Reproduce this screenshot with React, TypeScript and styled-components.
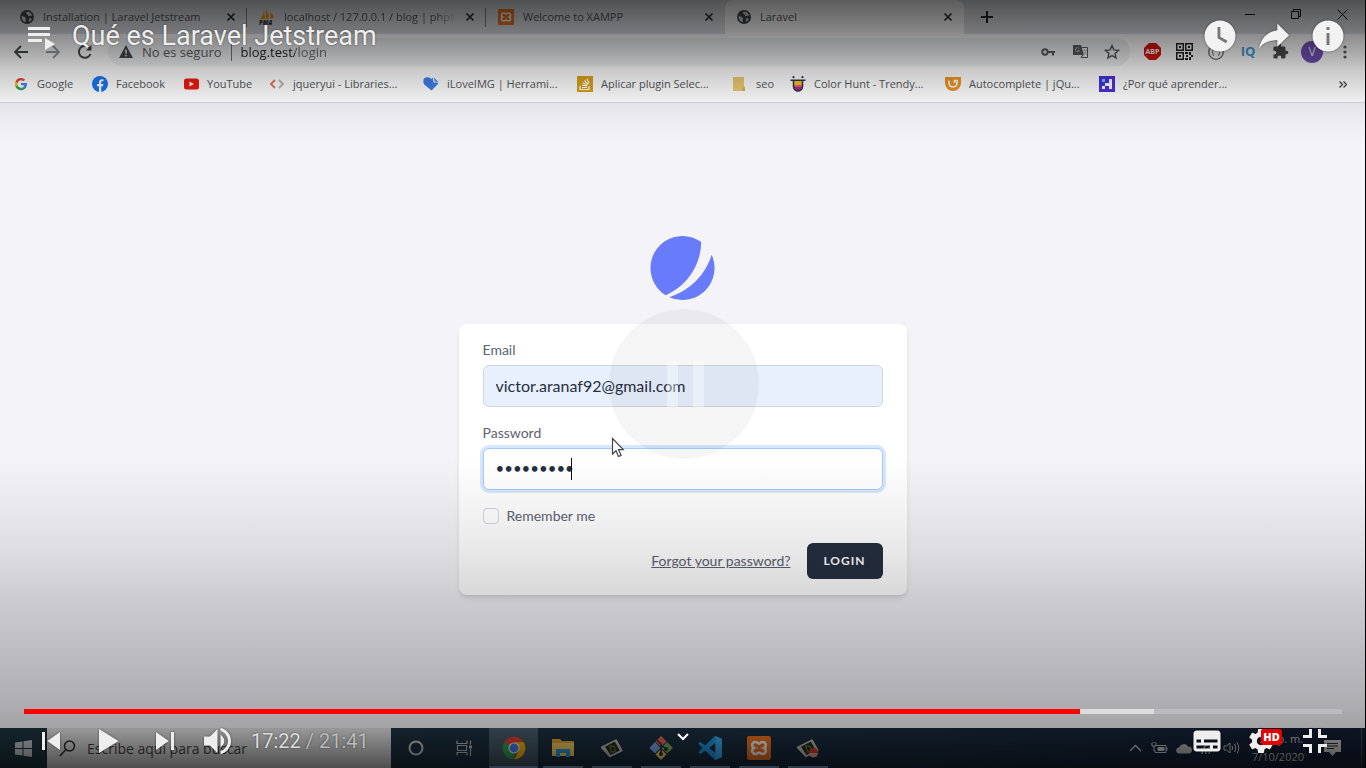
import React from "react";
import styled, { createGlobalStyle, css } from "styled-components";

const GlobalStyle = createGlobalStyle`
  * { box-sizing: border-box; }
  html, body { margin: 0; padding: 0; background: #000; }
  button, input { font: inherit; color: inherit; }
  button { border: 0; padding: 0; margin: 0; background: none; cursor: pointer; }
  a { color: inherit; }
  svg { display: block; flex: none; }
`;

/* ---------- shell ---------- */

const Stage = styled.div`
  position: relative;
  display: flex;
  flex-direction: column;
  min-height: 100vh;
  border-right: 1px solid #000;
  background: #f3f3f8;
  overflow: hidden;
  font-family: "Open Sans", "Noto Sans", sans-serif;
  font-size: 12px;
  color: #45484c;
`;

const TabStrip = styled.header`
  display: flex;
  align-items: stretch;
  height: 34px;
  padding-left: 8px;
  background: #dee1e6;
`;

const TabItem = styled.div<{ $active?: boolean; $divider?: boolean }>`
  position: relative;
  display: flex;
  align-items: center;
  gap: 9px;
  flex: 0 1 239px;
  min-width: 0;
  padding: 0 11px 0 12px;
  ${(p) =>
    p.$active &&
    css`
      background: #fff;
      border-radius: 8px 8px 0 0;
    `}
  ${(p) =>
    p.$divider &&
    css`
      &::after {
        content: "";
        position: absolute;
        right: 0;
        top: 8px;
        height: 19px;
        width: 1px;
        background: #808388;
      }
    `}
`;

const TabTitle = styled.span<{ $fade?: boolean }>`
  flex: 1;
  min-width: 0;
  overflow: hidden;
  white-space: nowrap;
  font-size: 11px;
  line-height: 16px;
  color: #54575b;
  ${(p) =>
    p.$fade &&
    css`
      mask-image: linear-gradient(90deg, #000 88%, transparent);
    `}
`;

const PlainButton = styled.button<{ $w?: number }>`
  display: flex;
  align-items: center;
  justify-content: center;
  flex: none;
  width: ${(p) => (p.$w ? `${p.$w}px` : "auto")};
`;

const WindowControls = styled.div`
  display: flex;
  margin-left: auto;
  height: 28px;
`;

const Toolbar = styled.div`
  display: flex;
  align-items: center;
  height: 35px;
  padding: 0 1px 0 5px;
  background: #fff;
`;

const Omnibox = styled.div`
  display: flex;
  align-items: center;
  flex: 1;
  height: 28px;
  margin: 0 4px 0 7px;
  padding: 0 2px 0 11px;
  border-radius: 14px;
  background: #f1f3f4;
  font-size: 13px;
  line-height: 18px;
`;

const Security = styled.span`
  margin-left: 9px;
  padding-right: 9px;
  border-right: 1px solid #777;
  color: #5f6368;
`;

const Address = styled.input`
  flex: 1;
  min-width: 0;
  margin-left: 9px;
  padding: 0;
  border: 0;
  outline: 0;
  color: transparent;
  background: linear-gradient(90deg, #202124 54px, #6b6f74 54px);
  background-clip: text;
`;

const Bookmarks = styled.nav`
  display: flex;
  align-items: center;
  gap: 16px;
  height: 34px;
  padding: 0 12px 3px 13px;
  border-bottom: 1px solid #dcdce2;
  background: #fff;
`;

const Bookmark = styled.a<{ $w: number }>`
  display: flex;
  align-items: center;
  gap: 8px;
  flex: 0 0 ${(p) => p.$w}px;
  overflow: hidden;
  white-space: nowrap;
  text-decoration: none;
  font-size: 11px;
  line-height: 18px;
  color: #54575b;
`;

/* ---------- login page ---------- */

const LoginPage = styled.main`
  display: flex;
  flex: 1;
  flex-direction: column;
  align-items: center;
  justify-content: center;
  gap: 24px;
  color: #5d6270;
  font-family: Lato, "Open Sans", sans-serif;
  font-size: 14px;
  line-height: 20px;
`;

const Card = styled.form`
  position: relative;
  width: 100%;
  max-width: 448px;
  padding: 16px 24px;
  border-radius: 8px;
  background: #fff;
  box-shadow: 0 4px 6px -1px rgba(0, 0, 0, 0.1), 0 2px 4px -1px rgba(0, 0, 0, 0.06);
`;

const Field = styled.div`
  position: relative;
  margin-bottom: 16px;
  label { display: block; margin-bottom: 5px; }
`;

const TextBox = styled.input<{ $focused?: boolean }>`
  display: block;
  width: 100%;
  height: 42px;
  padding: 0 12px 2px;
  border: 1px solid ${(p) => (p.$focused ? "#a4cafe" : "#d2d6e0")};
  border-radius: 6px;
  outline: 0;
  background: ${(p) => (p.$focused ? "#fff" : "#e8f0fe")};
  box-shadow: ${(p) => (p.$focused ? "0 0 0 3px rgba(164, 202, 254, 0.45)" : "none")};
  color: #252f3f;
  font-size: ${(p) => (p.$focused ? "15px" : "16px")};
`;

const Caret = styled.span`
  position: absolute;
  left: 88px;
  bottom: 10px;
  width: 1px;
  height: 22px;
  background: #111;
`;

const Remember = styled.label`
  display: flex;
  align-items: center;
  gap: 8px;
  margin-bottom: 17px;
  input {
    appearance: none;
    width: 16px;
    height: 16px;
    margin: 0;
    border: 1px solid #d2d6dc;
    border-radius: 4px;
    background: #fff;
  }
`;

const Actions = styled.div`
  display: flex;
  align-items: center;
  justify-content: flex-end;
  gap: 16px;
`;

const LoginButton = styled.button`
  min-width: 76px;
  height: 36px;
  padding: 0 16px;
  border-radius: 6px;
  background: #252f3f;
  color: #fff;
  font-size: 12px;
  font-weight: 700;
  letter-spacing: 1px;
`;

const Pointer = styled.svg`
  position: absolute;
  left: 152px;
  top: 113px;
`;

/* ---------- desktop taskbar ---------- */

const Taskbar = styled.footer`
  display: flex;
  align-items: stretch;
  height: 40px;
  background: linear-gradient(90deg, #1d3640, #1b2f40 50%, #131e34);
  color: #c0c0c0;
`;

const SearchBox = styled.label`
  display: flex;
  align-items: center;
  gap: 11px;
  width: 344px;
  padding-left: 12px;
  background: #dedede;
  color: #333;
  input {
    flex: 1;
    min-width: 0;
    border: 0;
    outline: 0;
    padding: 0;
    background: none;
    font-size: 14px;
  }
  input::placeholder { color: #444; opacity: 1; }
`;

const TaskButton = styled.button<{ $active?: boolean; $running?: boolean }>`
  display: flex;
  align-items: center;
  justify-content: center;
  width: 49px;
  background: ${(p) => (p.$active ? "#475c6a" : "transparent")};
  ${(p) =>
    p.$running &&
    css`
      background-image: linear-gradient(#76a9d8, #76a9d8);
      background-size: ${p.$active ? "49px" : "40px"} 2px;
      background-position: bottom center;
      background-repeat: no-repeat;
    `}
`;

const Tray = styled.div`
  display: flex;
  align-items: center;
  margin: 0 3px 0 auto;
  padding-right: 11px;
  border-right: 1px solid #3c4658;
`;

const DateTime = styled.div`
  width: 72px;
  text-align: center;
  font-size: 11px;
  line-height: 18px;
  white-space: nowrap;
`;

/* ---------- video player overlay ---------- */

const Player = styled.section`
  position: absolute;
  inset: 0;
  display: flex;
  flex-direction: column;
  justify-content: space-between;
  color: #eee;
  font-family: Roboto, sans-serif;
  background:
    linear-gradient(
      rgba(0, 0, 0, 0.64),
      rgba(0, 0, 0, 0.48) 30px,
      rgba(0, 0, 0, 0.34) 52px,
      rgba(0, 0, 0, 0.21) 70px,
      rgba(0, 0, 0, 0.07) 100px,
      rgba(0, 0, 0, 0.02) 125px,
      rgba(0, 0, 0, 0) 150px
    ),
    linear-gradient(
      to top,
      rgba(0, 0, 0, 0.65),
      rgba(0, 0, 0, 0.33) 38px,
      rgba(0, 0, 0, 0.28) 68px,
      rgba(0, 0, 0, 0.16) 168px,
      rgba(0, 0, 0, 0.09) 218px,
      rgba(0, 0, 0, 0.04) 268px,
      rgba(0, 0, 0, 0) 310px
    );
`;

const PlayerTop = styled.div`
  display: flex;
  align-items: center;
  height: 72px;
  padding: 0 10px 0 27px;
`;

const VideoTitle = styled.h1`
  flex: 1;
  margin: 0 0 0 17px;
  font-size: 27px;
  font-weight: 400;
  line-height: 32px;
  text-shadow: 0 0 2px rgba(0, 0, 0, 0.5);
`;

const PlayerBottom = styled.div`
  position: relative;
  padding: 0 23px 0 24px;
`;

const Progress = styled.div`
  position: relative;
  height: 5px;
  background: rgba(255, 255, 255, 0.2);
`;

const ProgressPart = styled.div<{ $end: number; $color: string }>`
  position: absolute;
  inset: 0 auto 0 0;
  width: ${(p) => p.$end}%;
  background: ${(p) => p.$color};
`;

const Controls = styled.div`
  display: flex;
  align-items: center;
  height: 54px;
`;

const Spacer = styled.span`
  flex: 1;
`;

const PlayerButton = styled.button<{ $w?: number }>`
  position: relative;
  width: ${(p) => p.$w ?? 54}px;
  height: 54px;
  svg { filter: drop-shadow(0 0 1px rgba(0, 0, 0, 0.5)); }
`;

const Time = styled.span`
  margin-left: 5px;
  font-size: 20px;
  color: #ddd;
  text-shadow: 0 0 2px rgba(0, 0, 0, 0.5);
  span { color: #bbb; }
`;

const Badge = styled.span`
  position: absolute;
  left: 27px;
  top: 15px;
  width: 21px;
  height: 16px;
  border-radius: 2px;
  background: #e60000;
  color: #fff;
  font: 800 11px/16px "Open Sans", sans-serif;
  text-align: center;
`;

const MoreButton = styled.button`
  position: absolute;
  left: 50%;
  top: 24px;
  margin-left: -6px;
`;

const Bezel = styled.div`
  position: absolute;
  left: 50%;
  top: 50%;
  display: flex;
  align-items: center;
  justify-content: center;
  gap: 15px;
  width: 150px;
  height: 150px;
  margin: -75px 0 0 -74px;
  padding-left: 3px;
  border-radius: 50%;
  background: rgba(0, 0, 0, 0.04);
  pointer-events: none;
  i { width: 11px; height: 46px; background: rgba(255, 255, 255, 0.4); }
`;

/* ---------- icons ---------- */

const Globe = () => (
  <svg width="14" height="14" viewBox="0 0 14 14">
    <circle cx="7" cy="7" r="7" fill="#45484c" />
    <path d="M1.800 5.200c1 1.800 2.800 1.200 3.800 2.600.8 1.400-.6 2 .2 4.200C3.400 11.800 1 9 1.800 5.200zM6.500 1.800c2.800-.6 5 1.200 5.600 3.600-.8 1-1.400-.2-2.400.6-1 .6-1.800.2-1.600-.8.2-1.200-1.800-.6-2-1.800-.1-.8.1-1.200.4-1.600zM9.500 8.500c1-.6 2 0 2.200.8-.6 1.200-1.400 2-2.400 2.400-.6-1.200-.4-2.400.2-3.200z" fill="#d4d6da" />
  </svg>
);

const Cross = () => (
  <svg width="10" height="10" viewBox="0 0 10 10" stroke="#2c2e31" strokeWidth="1.700">
    <path d="M1.500 1.500l7 7M8.500 1.500l-7 7" />
  </svg>
);

const XamppMark = ({ size }: { size: number }) => (
  <svg width={size} height={size} viewBox="0 0 24 24">
    <rect width="24" height="24" rx="2" fill="#f37623" />
    <path
      d="M8.500 6C5 6 4 10.500 7 12c-3 1.500-2 6 1.500 6 2 0 2.500-1.500 3.500-1.500s1.500 1.500 3.500 1.500c3.500 0 4.500-4.500 1.500-6 3-1.500 2-6-1.500-6-2 0-2.500 1.500-3.500 1.500S10.500 6 8.500 6zM9 11.500v1M15 11.500v1"
      fill="none"
      stroke="#fff"
      strokeWidth="2.600"
      strokeLinejoin="round"
    />
  </svg>
);

const PmaMark = () => (
  <svg width="16" height="16" viewBox="0 0 16 16">
    <path d="M1 10C3 8 4.500 5 5 2l1.500 8zM7 10V1c2 2 3 5 3 8zM11 9.500c.6-2 .6-4 0-6.500 2 1.500 3.500 4 4 6z" fill="#f39c12" />
    <text x="0" y="15.500" fontFamily="Open Sans" fontSize="6" fontWeight="800" fontStyle="italic" fill="#333">PMA</text>
  </svg>
);

const Windows = () => (
  <svg width="17" height="17" viewBox="0 0 17 17" fill="#c8cdd0">
    <path d="M0 2.500L7.500 1.400V8H0zM8.500 1.200L17 0v8H8.500zM0 9h7.500v6.600L0 14.500zM8.500 9H17v8l-8.500-1.200z" />
  </svg>
);

const Camtasia = ({ rec }: { rec?: boolean }) => (
  <svg width="24" height="24" viewBox="0 0 24 24">
    <path d="M1.500 10.500L15.500 3.500a1 1 0 011.400.4L22.500 14a1 1 0 01-.4 1.400L10.500 21a1 1 0 01-1.400-.3L1 12a1 1 0 01.5-1.500z" fill="#c4c4bb" />
    <path d="M5 10.800L14.800 5.500l5 9L10.500 19z" fill="#262c22" />
    <path d="M9 9l6 1 1 6-5 1z" fill="#5c7238" />
    <path d="M11 11l3 .5.5 3-2.500.5z" fill="#1c2118" />
    {rec && (
      <>
        <circle cx="17.500" cy="16.500" r="4.500" fill="#e8382d" />
        <path d="M13 17a4.500 4.500 0 009 0z" fill="#eee" opacity=".6" />
      </>
    )}
  </svg>
);

const Chrome = () => (
  <svg width="24" height="24" viewBox="0 0 24 24">
    <path d="M12 12L2.200 6.300A11.300 11.300 0 0121.800 6.300z" fill="#ea4335" />
    <path d="M12 12v11.300A11.300 11.300 0 012.200 6.300z" fill="#34a853" />
    <path d="M12 6.300h9.800A11.300 11.300 0 0112 23.300l4.900-8.500z" fill="#fbbc05" />
    <circle cx="12" cy="12" r="5.600" fill="#f2f2f2" />
    <circle cx="12" cy="12" r="4.400" fill="#4285f4" />
  </svg>
);

const Folder = () => (
  <svg width="22" height="20" viewBox="0 0 22 20">
    <path d="M0 1h8l2 2h12v15H0z" fill="#e5a72b" />
    <path d="M0 5h22v13H0z" fill="#fcd462" />
    <path d="M4 11h14v8h-4v-4H8v4H4z" fill="#2f9be8" />
  </svg>
);

const GitMark = () => (
  <svg width="24" height="24" viewBox="0 0 24 24">
    <path d="M12 0l5.500 5.500L12 11 6.500 5.500z" fill="#ee6a5f" />
    <path d="M6 6l5.500 6L6 17.500.300 12z" fill="#7fa8ee" />
    <path d="M18 6l6 6-6 5.500L12.500 12z" fill="#7bb661" />
    <path d="M12 13l5.500 5.500L12 24l-5.500-5.500z" fill="#f0d56a" />
    <path d="M8 4l4 4v10M12 9l5 4" stroke="#2a3036" strokeWidth="1.600" fill="none" />
    <circle cx="12" cy="18" r="2" fill="#2a3036" />
    <circle cx="17" cy="13" r="2" fill="#2a3036" />
  </svg>
);

const VsCode = () => (
  <svg width="24" height="24" viewBox="0 0 24 24">
    <path d="M17 0l7 3v18l-7 3L7 14.500 2.500 18 0 16.500 4.500 12 0 7.500 2.500 6 7 9.500zM17.500 7L11 12l6.500 5z" fill="#1e9be8" fillRule="evenodd" />
    <path d="M17.500 0L24 3v18l-6.500 3z" fill="#3bb0f5" />
  </svg>
);

const Qr = () => (
  <svg width="17" height="17" viewBox="0 0 17 17" fill="#222">
    <path fillRule="evenodd" d="M0 0h8v8H0zM1.500 1.500v5h5v-5zM9 0h8v8H9zM10.500 1.500v5h5v-5zM0 9h8v8H0zM1.500 10.500v5h5v-5z" />
    <path d="M3 3h2v2H3zM12 3h2v2h-2zM3 12h2v2H3zM9 9h3v2H9zM13 9h2v3h-2zM10 12h2v2h-2zM15 12h2v2h-2zM9 15h3v2H9zM13 14h2v3h-2z" />
  </svg>
);

const bookmarks: { label: string; w: number; icon: React.ReactNode }[] = [
  {
    label: "Google",
    w: 63,
    icon: (
      <svg width="16" height="16" viewBox="0 0 48 48">
        <g transform="translate(4 4) scale(.84)">
          <path fill="#4285F4" d="M45.100 24.500c0-1.600-.1-3.100-.4-4.500H24v8.500h11.800c-.5 2.800-2.100 5.100-4.400 6.700v5.500h7.100c4.200-3.800 6.600-9.500 6.600-16.200z" />
          <path fill="#34A853" d="M24 46c5.900 0 10.900-2 14.500-5.300l-7.100-5.500c-2 1.300-4.500 2.100-7.400 2.100-5.700 0-10.500-3.900-12.300-9.100H4.300v5.700C7.900 41.100 15.400 46 24 46z" />
          <path fill="#FBBC05" d="M11.700 28.200c-.9-2.700-.9-5.700 0-8.400v-5.700H4.300a22 22 0 000 19.800z" />
          <path fill="#EA4335" d="M24 10.700c3.200 0 6.100 1.100 8.400 3.300l6.300-6.300A22 22 0 004.300 14.100l7.400 5.700C13.500 14.600 18.300 10.700 24 10.700z" />
        </g>
      </svg>
    ),
  },
  {
    label: "Facebook",
    w: 75,
    icon: (
      <svg width="16" height="16" viewBox="0 0 16 16">
        <circle cx="8" cy="8" r="8" fill="#1877f2" />
        <path d="M7 16V10.300H5V8h2V6.300C7 4.200 8.200 3.200 10 3.200l1.500.1v2h-1c-1 0-1.300.5-1.300 1.200V8h2.200l-.4 2.300H9.200V16z" fill="#fff" />
      </svg>
    ),
  },
  {
    label: "YouTube",
    w: 70,
    icon: (
      <svg width="16" height="16" viewBox="0 0 16 16">
        <rect x="1" y="2.500" width="15" height="11" rx="2.500" fill="#f01a0c" />
        <path d="M6.500 5.500v5L11 8z" fill="#fff" />
      </svg>
    ),
  },
  {
    label: "jqueryui - Libraries...",
    w: 138,
    icon: (
      <svg width="16" height="16" viewBox="0 0 16 16" fill="none" strokeWidth="1.800">
        <path d="M6 4L2 8l4 4" stroke="#e8744f" />
        <path d="M10 4l4 4-4 4" stroke="#b5b5b5" />
      </svg>
    ),
  },
  {
    label: "iLoveIMG | Herrami...",
    w: 138,
    icon: (
      <svg width="16" height="16" viewBox="0 0 16 16">
        <path d="M8.500 14.500L1.500 8.800C-.5 6 0 1.500 3.500 1.200 6 1 7.500 2 8.200 3c.5-.6 1-.9 1.600-1.200L10.500 6.500l5 .3c-.3.900-.8 1.500-1.500 2.200z" fill="#3f7fe8" />
        <path d="M11 1.500L15.500 6l-4-.3z" fill="#5b92ee" />
      </svg>
    ),
  },
  {
    label: "Aplicar plugin Selec...",
    w: 139,
    icon: (
      <svg width="16" height="16" viewBox="0 0 16 16">
        <rect width="16" height="16" fill="#dba21a" />
        <path d="M3 10v3.500h9V10M5 11.500h5M5 9.200l5 .8M5.800 6.800l4.600 2.300M7.400 4.500l3.700 3.600M10 2.800l2 4.600" stroke="#fff" strokeWidth="1.200" fill="none" />
      </svg>
    ),
  },
  {
    label: "seo",
    w: 42,
    icon: (
      <svg width="16" height="16" viewBox="0 0 16 16">
        <path d="M1 1h11v9l1 1v4H1z" fill="#ecca6e" />
        <path d="M10 11.500h3V15h-3z" fill="#ddb54f" />
      </svg>
    ),
  },
  {
    label: "Color Hunt - Trendy...",
    w: 139,
    icon: (
      <svg width="16" height="16" viewBox="0 0 16 16">
        <path d="M4 5h8v6a4 4 0 01-8 0z" fill="#f5c518" />
        <path d="M4 9h8v2H4z" fill="#ef5a5a" />
        <path d="M4 11h8a4 4 0 01-8 0z" fill="#9a2f8c" />
        <path d="M.5 4.200h15M3.500 4.500v6a4.500 4.500 0 009 0v-6" stroke="#2f3350" strokeWidth="1.500" fill="none" />
        <circle cx="3.500" cy="1.200" r="1.100" fill="#2f3350" />
        <circle cx="12.500" cy="1.200" r="1.100" fill="#2f3350" />
      </svg>
    ),
  },
  {
    label: "Autocomplete | jQu...",
    w: 138,
    icon: (
      <svg width="16" height="16" viewBox="0 0 16 16">
        <path d="M0 1h16v6a8 8 0 01-16 0z" fill="#f0941f" />
        <path d="M4 4.500V7a4 4 0 008 0V4.500H9.500V7" stroke="#fff" strokeWidth="1.700" fill="none" />
      </svg>
    ),
  },
  {
    label: "¿Por qué aprender...",
    w: 138,
    icon: (
      <svg width="16" height="16" viewBox="0 0 16 16">
        <rect width="16" height="16" fill="#4a2fe0" />
        <path d="M3 10h3v3H3zM6 7h4v3H6zM10 3h3v10h-3z" fill="#fff" />
        <path d="M3 3h3v3H3z" fill="#5cc8ff" />
      </svg>
    ),
  },
];

const g = "#5a5d61";

export default function App() {
  return (
    <>
      <GlobalStyle />
      <Stage>
        <TabStrip>
          <TabItem $divider>
            <Globe />
            <TabTitle>Installation | Laravel Jetstream</TabTitle>
            <PlainButton aria-label="Cerrar"><Cross /></PlainButton>
          </TabItem>
          <TabItem $divider>
            <PmaMark />
            <TabTitle $fade>localhost / 127.0.0.1 / blog | phpMyAdmin</TabTitle>
            <PlainButton aria-label="Cerrar"><Cross /></PlainButton>
          </TabItem>
          <TabItem>
            <XamppMark size={16} />
            <TabTitle>Welcome to XAMPP</TabTitle>
            <PlainButton aria-label="Cerrar"><Cross /></PlainButton>
          </TabItem>
          <TabItem $active>
            <Globe />
            <TabTitle>Laravel</TabTitle>
            <PlainButton aria-label="Cerrar"><Cross /></PlainButton>
          </TabItem>
          <PlainButton $w={46} aria-label="Nueva pestaña">
            <svg width="12" height="12" viewBox="0 0 12 12" stroke="#26282b" strokeWidth="2"><path d="M6 0v12M0 6h12" /></svg>
          </PlainButton>
          <WindowControls>
            <PlainButton $w={46} aria-label="Minimizar">
              <svg width="10" height="10" stroke="#111"><path d="M0 5.500h10" /></svg>
            </PlainButton>
            <PlainButton $w={46} aria-label="Restaurar">
              <svg width="11" height="11" stroke="#111" fill="none"><path d="M.5 2.500h7v7h-7zM2.500 2.500v-2h7v7h-2" /></svg>
            </PlainButton>
            <PlainButton $w={46} aria-label="Cerrar ventana">
              <svg width="11" height="11" stroke="#111"><path d="M.5.5l10 10M10.500.5l-10 10" /></svg>
            </PlainButton>
          </WindowControls>
        </TabStrip>

        <Toolbar>
          <PlainButton $w={32} aria-label="Atrás">
            <svg width="14" height="14" viewBox="0 0 14 14" fill="none" stroke="#45484c" strokeWidth="1.800"><path d="M14 7H1.500M7 1L1 7l6 6" /></svg>
          </PlainButton>
          <PlainButton $w={32} aria-label="Adelante">
            <svg width="14" height="14" viewBox="0 0 14 14" fill="none" stroke="#9a9da1" strokeWidth="1.800"><path d="M0 7h12.500M7 1l6 6-6 6" /></svg>
          </PlainButton>
          <PlainButton $w={32} aria-label="Recargar">
            <svg width="16" height="16" viewBox="0 0 16 16" fill="none" stroke="#45484c" strokeWidth="2"><path d="M13.500 10A6 6 0 1112.600 4" /><path d="M14.500.8v5.700H9z" fill="#45484c" stroke="none" /></svg>
          </PlainButton>
          <Omnibox>
            <svg width="14" height="13" viewBox="0 0 14 13"><path d="M7 0l7 13H0z" fill="#45484c" /><path d="M7 4.500v4M7 9.800v1.500" stroke="#eee" strokeWidth="1.500" /></svg>
            <Security>No es seguro</Security>
            <Address aria-label="Dirección" defaultValue="blog.test/login" />
            <PlainButton $w={32} aria-label="Contraseñas">
              <svg width="14" height="8" viewBox="0 0 14 8"><circle cx="4" cy="4" r="2.700" fill="none" stroke={g} strokeWidth="2" /><path d="M7 3h7v2h-1v2.500h-2V5H7z" fill={g} /></svg>
            </PlainButton>
            <PlainButton $w={32} aria-label="Traducir">
              <svg width="15" height="15" viewBox="0 0 15 15">
                <path d="M0 1h8l3 10H0z" fill={g} />
                <path d="M8.500 3.500h6v10H8l2-2.500" fill="none" stroke={g} />
                <path d="M6 4.500a2 2 0 10.300 2H4.500M10 6.500h4M12 5.500v1M13 6.500c-.5 2-1.500 3-2.500 4M11 8c.5 1.200 1.500 2 2.500 2.500" fill="none" stroke="#bbb" strokeWidth=".9" />
              </svg>
            </PlainButton>
            <PlainButton $w={32} aria-label="Favorito">
              <svg width="16" height="16" viewBox="0 0 24 24" fill="none" stroke={g} strokeWidth="2.200"><path d="M12 2.500l2.900 6.300 6.900.7-5.200 4.600 1.500 6.800-6.100-3.500-6.100 3.500 1.500-6.800-5.200-4.600 6.900-.7z" /></svg>
            </PlainButton>
          </Omnibox>
          <PlainButton $w={36} aria-label="Adblock Plus">
            <svg width="17" height="17" viewBox="0 0 17 17">
              <path d="M5 0h7l5 5v7l-5 5H5l-5-5V5z" fill="#d8160c" />
              <text x="8.500" y="11.200" textAnchor="middle" fontFamily="Open Sans" fontSize="7" fontWeight="700" fill="#fff">ABP</text>
            </svg>
          </PlainButton>
          <PlainButton $w={28} aria-label="Código QR"><Qr /></PlainButton>
          <PlainButton $w={36} aria-label="JSON">
            <svg width="16" height="16" viewBox="0 0 16 16" fill="none" stroke="#666"><circle cx="8" cy="8" r="7.300" strokeWidth="1.300" /><path d="M6 4.500c-2 0-.5 3-2 3.500 1.500.5 0 3.500 2 3.500M10 4.500c2 0 .5 3 2 3.500-1.500.5 0 3.500-2 3.500" /></svg>
          </PlainButton>
          <PlainButton $w={28} aria-label="IQ">
            <svg width="22" height="20" viewBox="0 0 22 20"><text x="11" y="14" textAnchor="middle" fontFamily="Open Sans" fontSize="13" fontWeight="700" fill="#3fa0dc">IQ</text></svg>
          </PlainButton>
          <PlainButton $w={36} aria-label="Extensiones">
            <svg width="17" height="17" viewBox="0 0 24 24" fill="#4a4d51"><path d="M20.500 11H19V7a2 2 0 00-2-2h-4V3.500a2.500 2.500 0 00-5 0V5H4a2 2 0 00-2 2v3.800h1.500a2.700 2.700 0 010 5.400H2V20a2 2 0 002 2h3.800v-1.500a2.700 2.700 0 015.400 0V22H17a2 2 0 002-2v-4h1.500a2.500 2.500 0 000-5z" /></svg>
          </PlainButton>
          <PlainButton $w={28} aria-label="Perfil">
            <svg width="22" height="22" viewBox="0 0 22 22"><circle cx="11" cy="11" r="11" fill="#7351b8" /><text x="11" y="15" textAnchor="middle" fontFamily="Open Sans" fontSize="12" fill="#eee">V</text></svg>
          </PlainButton>
          <PlainButton $w={38} aria-label="Menú">
            <svg width="4" height="14" viewBox="0 0 4 14" fill={g}><circle cx="2" cy="2" r="1.600" /><circle cx="2" cy="7" r="1.600" /><circle cx="2" cy="12" r="1.600" /></svg>
          </PlainButton>
        </Toolbar>

        <Bookmarks>
          {bookmarks.map((b) => (
            <Bookmark key={b.label} href="#" $w={b.w}>
              {b.icon}
              {b.label}
            </Bookmark>
          ))}
          <Spacer />
          <PlainButton $w={20} aria-label="Más marcadores">
            <svg width="8" height="7" viewBox="0 0 8 7" fill="none" stroke="#45484c" strokeWidth="1.400"><path d="M.5.5l3 3-3 3M4.500.5l3 3-3 3" /></svg>
          </PlainButton>
        </Bookmarks>

        <LoginPage>
          <svg width="65" height="64" viewBox="0 0 48 48" fill="#677bfb">
            <path d="M11.395 44.428C4.557 40.198 0 32.632 0 24 0 10.745 10.745 0 24 0a23.891 23.891 0 0113.997 4.502c-.2 17.907-11.097 33.245-26.602 39.926z" />
            <path d="M14.134 45.885A23.914 23.914 0 0024 48c13.255 0 24-10.745 24-24 0-3.516-.756-6.856-2.115-9.866-4.659 15.143-16.608 27.092-31.750 31.751z" />
          </svg>
          <Card onSubmit={(e) => e.preventDefault()}>
            <Field>
              <label htmlFor="email">Email</label>
              <TextBox id="email" type="email" defaultValue="victor.aranaf92@gmail.com" />
            </Field>
            <Field>
              <label htmlFor="password">Password</label>
              <TextBox id="password" type="password" defaultValue="laravel92" $focused />
              <Caret />
            </Field>
            <Remember>
              <input type="checkbox" />
              Remember me
            </Remember>
            <Actions>
              <a href="#">Forgot your password?</a>
              <LoginButton type="submit">LOGIN</LoginButton>
            </Actions>
            <Pointer width="14" height="22" viewBox="0 0 14 22">
              <path d="M1.500 1.500v15.500l3.500-3.300 2.500 5.800 2.600-1.100-2.500-5.700h4.700z" fill="#fff" stroke="#444" strokeWidth="1.200" />
            </Pointer>
          </Card>
        </LoginPage>

        <Taskbar>
          <PlainButton $w={47} aria-label="Inicio"><Windows /></PlainButton>
          <SearchBox>
            <svg width="17" height="17" viewBox="0 0 17 17" fill="none" stroke="#2b2b2b" strokeWidth="1.500"><circle cx="10.500" cy="6" r="5" /><path d="M7 9.500L.8 16" /></svg>
            <input placeholder="Escribe aquí para buscar" />
          </SearchBox>
          <TaskButton aria-label="Cortana">
            <svg width="16" height="16" viewBox="0 0 16 16"><circle cx="8" cy="8" r="6.500" fill="none" stroke="#ccd0d2" strokeWidth="2" /></svg>
          </TaskButton>
          <TaskButton aria-label="Vista de tareas">
            <svg width="17" height="16" viewBox="0 0 17 16" fill="none" stroke="#b8bcbe" strokeWidth="1.200"><path d="M1 .5v3h10v-3M1.500 5.500h9v5h-9zM1 15.500v-3h10v3M14.500.5v4M14.500 9v7" /><path d="M13 5.500h3v3h-3z" fill="#b8bcbe" stroke="none" /></svg>
          </TaskButton>
          <TaskButton $active $running aria-label="Chrome"><Chrome /></TaskButton>
          <TaskButton $running aria-label="Explorador"><Folder /></TaskButton>
          <TaskButton $running aria-label="Camtasia"><Camtasia /></TaskButton>
          <TaskButton $running aria-label="Git"><GitMark /></TaskButton>
          <TaskButton $running aria-label="Visual Studio Code"><VsCode /></TaskButton>
          <TaskButton $running aria-label="XAMPP"><XamppMark size={24} /></TaskButton>
          <TaskButton $running aria-label="Grabadora"><Camtasia rec /></TaskButton>
          <Tray>
            <PlainButton $w={24} aria-label="Iconos ocultos">
              <svg width="13" height="8" viewBox="0 0 13 8" fill="none" stroke="#ccc" strokeWidth="1.300"><path d="M1 7l5.500-5.500L12 7" /></svg>
            </PlainButton>
            <PlainButton $w={24} aria-label="Batería">
              <svg width="17" height="12" viewBox="0 0 17 12" fill="none" stroke="#ccc"><path d="M5 3.500h10v7H4V8" /><path d="M7 5.500h6v3H7z" fill="#ccc" /><path d="M16 5.500v3M1 1v3h4V1M3 4v5M2 0v1M4 0v1" /></svg>
            </PlainButton>
            <PlainButton $w={25} aria-label="OneDrive">
              <svg width="16" height="11" viewBox="0 0 16 11"><path d="M3.500 10.500a3 3 0 01-.5-6A5 5 0 0112 3.500a3.500 3.500 0 01.8 7z" fill="#bbb" /></svg>
            </PlainButton>
            <PlainButton $w={24} aria-label="Red">
              <svg width="14" height="13" viewBox="0 0 14 13" fill="none" stroke="#ccc" strokeWidth="1.200"><path d="M1 12A11 11 0 0112 1M4.500 12A7.500 7.500 0 0112 4.500M8 12a4 4 0 014-4" /></svg>
            </PlainButton>
            <PlainButton $w={22} aria-label="Volumen">
              <svg width="17" height="14" viewBox="0 0 17 14" fill="none" stroke="#ccc"><path d="M1 5h2.500L7 2v10L3.500 9H1zM9 5q1.300 2 0 4M11.500 3q2.500 4 0 8M14 1.500q3.500 5.500 0 11" /></svg>
            </PlainButton>
            <DateTime>
              1:14 p. m.
              <br />
              7/10/2020
            </DateTime>
            <PlainButton $w={36} aria-label="Notificaciones">
              <svg width="17" height="16" viewBox="0 0 17 16"><path d="M0 0h17v12h-5l-3.500 4L5 12H0z" fill="#ccc" /><path d="M3 3.500h11M3 6h11M3 8.500h7" stroke="#2a3036" /></svg>
            </PlainButton>
          </Tray>
        </Taskbar>

        <Player>
          <PlayerTop>
            <PlainButton aria-label="Lista de reproducción">
              <svg width="28" height="28" viewBox="0 0 28 28" fill="#eee"><path d="M1 5h22v3H1zM1 11h22v3H1zM1 17h14v3H1zM18 16v12l10-6z" /></svg>
            </PlainButton>
            <VideoTitle>Qué es Laravel Jetstream</VideoTitle>
            <PlayerButton aria-label="Ver más tarde">
              <svg width="54" height="54" viewBox="0 0 36 36"><circle cx="18" cy="18" r="10.300" fill="#f2f2f2" /><path d="M17.300 12v7l5.200 3" fill="none" stroke="#777" strokeWidth="1.900" /></svg>
            </PlayerButton>
            <PlayerButton aria-label="Compartir">
              <svg width="54" height="54" viewBox="0 0 36 36"><path d="m 20.200,14.190 0,-4.450 7.790,7.790 -7.790,7.620 0,-4.560 C 16.270,20.690 12.100,21.810 9.340,24.760 8.800,25.130 7.600,27.290 8.120,25.650 9.080,21.320 11.800,17.180 15.980,15.380 c 1.330,-0.600 2.760,-0.980 4.210,-1.190 z" fill="#f2f2f2" /></svg>
            </PlayerButton>
            <PlayerButton aria-label="Información">
              <svg width="54" height="54" viewBox="0 0 36 36"><circle cx="18" cy="18" r="10.300" fill="#f2f2f2" /><path d="M17 12h2v2h-2zM17 16h2v8h-2z" fill="#777" /></svg>
            </PlayerButton>
          </PlayerTop>

          <Bezel><i /><i /></Bezel>

          <PlayerBottom>
            <Progress role="progressbar" aria-label="Progreso">
              <ProgressPart $end={85.7} $color="rgba(255, 255, 255, 0.5)" />
              <ProgressPart $end={80.1} $color="#f00" />
            </Progress>
            <Controls>
              <PlayerButton $w={57} aria-label="Anterior">
                <svg width="54" height="54" viewBox="0 0 36 36" fill="#eee"><path d="m 12,12 h 2 v 12 h -2 z m 3.500,6 8.500,6 V 12 z" /></svg>
              </PlayerButton>
              <PlayerButton $w={57} aria-label="Reproducir">
                <svg width="54" height="54" viewBox="0 0 36 36" fill="#eee"><path d="M12 10v16l13-8z" /></svg>
              </PlayerButton>
              <PlayerButton aria-label="Siguiente">
                <svg width="54" height="54" viewBox="0 0 36 36" fill="#eee"><path d="M 12,24 20.500,18 12,12 V 24 z M 22,12 v 12 h 2 V 12 h -2 z" /></svg>
              </PlayerButton>
              <PlayerButton aria-label="Silenciar">
                <svg width="54" height="54" viewBox="0 0 36 36" fill="#eee"><path d="M8,21 L12,21 L17,26 L17,10 L12,15 L8,15 Z M19,14 L19,22 C20.480,21.320 21.500,19.770 21.500,18 C21.500,16.260 20.480,14.740 19,14 Z M19,11.290 C21.890,12.150 24,14.830 24,18 C24,21.170 21.890,23.850 19,24.710 L19,26.770 C23.010,25.860 26,22.280 26,18 C26,13.720 23.010,10.140 19,9.230 Z" /></svg>
              </PlayerButton>
              <Time>17:22 <span>/ 21:41</span></Time>
              <Spacer />
              <PlayerButton aria-label="Subtítulos">
                <svg width="54" height="54" viewBox="0 0 36 36" fill="#eee"><path fillRule="evenodd" d="M11,11 C9.900,11 9,11.900 9,13 L9,23 C9,24.100 9.900,25 11,25 L25,25 C26.100,25 27,24.100 27,23 L27,13 C27,11.900 26.100,11 25,11 Z M11,17 L14,17 L14,19 L11,19 Z M20,23 L11,23 L11,21 L20,21 Z M25,23 L22,23 L22,21 L25,21 Z M25,19 L16,19 L16,17 L25,17 Z" /></svg>
              </PlayerButton>
              <PlayerButton aria-label="Configuración">
                <svg width="54" height="54" viewBox="0 0 36 36" fill="#eee"><path d="m 23.940,18.780 c .03,-0.250 .05,-0.510 .05,-0.780 0,-0.270 -0.020,-0.520 -0.050,-0.780 l 1.680,-1.320 c .15,-0.120 .19,-0.330 .09,-0.510 l -1.600,-2.760 c -0.090,-0.170 -0.310,-0.240 -0.480,-0.170 l -1.990,.8 c -0.410,-0.320 -0.860,-0.580 -1.350,-0.780 l -0.300,-2.120 c -0.020,-0.190 -0.190,-0.330 -0.390,-0.330 l -3.200,0 c -0.200,0 -0.360,.14 -0.390,.33 l -0.300,2.120 c -0.480,.2 -0.930,.47 -1.350,.78 l -1.990,-0.800 c -0.180,-0.070 -0.390,0 -0.480,.17 l -1.600,2.760 c -0.100,.17 -0.050,.39 .09,.51 l 1.680,1.320 c -0.030,.25 -0.050,.52 -0.050,.78 0,.26 .02,.52 .05,.78 l -1.680,1.320 c -0.150,.12 -0.190,.33 -0.090,.51 l 1.600,2.760 c .09,.17 .31,.24 .48,.17 l 1.990,-0.800 c .41,.32 .86,.58 1.350,.78 l .3,2.120 c .02,.19 .19,.33 .39,.33 l 3.200,0 c .2,0 .36,-0.140 .39,-0.330 l .3,-2.120 c .48,-0.200 .93,-0.470 1.350,-0.780 l 1.990,.8 c .18,.07 .39,0 .48,-0.170 l 1.600,-2.760 c .09,-0.170 .05,-0.390 -0.090,-0.510 l -1.680,-1.320 z m -5.940,2.010 c -1.540,0 -2.800,-1.250 -2.800,-2.800 0,-1.540 1.250,-2.800 2.800,-2.800 1.540,0 2.800,1.250 2.800,2.800 0,1.540 -1.250,2.800 -2.800,2.800 z" /></svg>
                <Badge>HD</Badge>
              </PlayerButton>
              <PlayerButton aria-label="Salir de pantalla completa">
                <svg width="54" height="54" viewBox="0 0 36 36" fill="#eee"><path d="M14 14h-4v2h6v-6h-2zM22 14v-4h-2v6h6v-2zM20 26h2v-4h4v-2h-6zM10 22h4v4h2v-6h-6z" /></svg>
              </PlayerButton>
            </Controls>
            <MoreButton aria-label="Más videos">
              <svg width="12" height="8" viewBox="0 0 12 8" fill="none" stroke="#fff" strokeWidth="2"><path d="M1 1l5 5 5-5" /></svg>
            </MoreButton>
          </PlayerBottom>
        </Player>
      </Stage>
    </>
  );
}
